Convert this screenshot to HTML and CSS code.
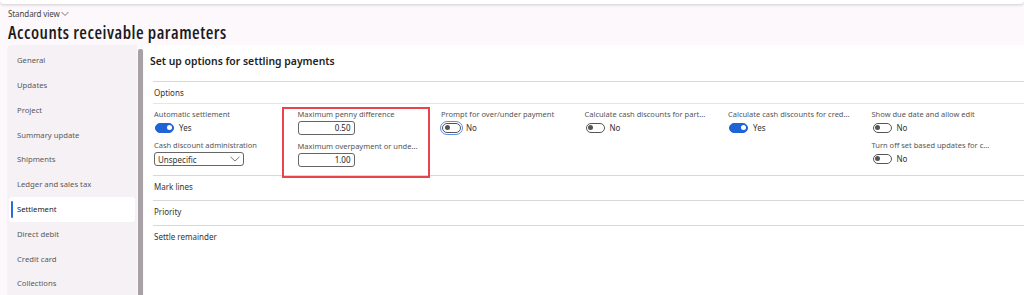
FILE: index.html
```html
<!DOCTYPE html>
<html>
<head>
<meta charset="utf-8">
<link rel="stylesheet" href="styles.css">
</head>
<body>
<div class="topbar"></div>
<header class="header">
  <div class="view">Standard view <svg class="chev" width="8" height="6" viewBox="0 0 8 6"><path d="M0.5 1 L4 4.5 L7.5 1" fill="none" stroke="#555" stroke-width="0.8"/></svg></div>
  <h1 class="title">Accounts receivable parameters</h1>
</header>
<div class="card">
  <nav class="nav">
    <div class="nav-item">General</div>
    <div class="nav-item">Updates</div>
    <div class="nav-item">Project</div>
    <div class="nav-item">Summary update</div>
    <div class="nav-item">Shipments</div>
    <div class="nav-item">Ledger and sales tax</div>
    <div class="nav-item active">Settlement</div>
    <div class="nav-item">Direct debit</div>
    <div class="nav-item">Credit card</div>
    <div class="nav-item">Collections</div>
  </nav>
  <div class="scroll"></div>
  <main class="main">
    <h2 class="heading">Set up options for settling payments</h2>
    <section class="group open">
      <div class="group-head">Options</div>
      <div class="fields">
        <div class="col">
          <div class="field">
            <div class="label">Automatic settlement</div>
            <div class="toggle-row"><span class="toggle on"></span><span class="tval">Yes</span></div>
          </div>
          <div class="field">
            <div class="label">Cash discount administration</div>
            <div class="select"><span>Unspecific</span><svg width="10" height="6" viewBox="0 0 10 6"><path d="M0.5 0.8 L5 5 L9.5 0.8" fill="none" stroke="#555" stroke-width="0.8"/></svg></div>
          </div>
        </div>
        <div class="col">
          <div class="field">
            <div class="label">Maximum penny difference</div>
            <div class="input">0.50</div>
          </div>
          <div class="field">
            <div class="label">Maximum overpayment or unde...</div>
            <div class="input">1.00</div>
          </div>
          <div class="annot"></div>
        </div>
        <div class="col">
          <div class="field">
            <div class="label">Prompt for over/under payment</div>
            <div class="toggle-row"><span class="toggle focus"></span><span class="tval">No</span></div>
          </div>
        </div>
        <div class="col">
          <div class="field">
            <div class="label">Calculate cash discounts for part...</div>
            <div class="toggle-row"><span class="toggle"></span><span class="tval">No</span></div>
          </div>
        </div>
        <div class="col">
          <div class="field">
            <div class="label">Calculate cash discounts for cred...</div>
            <div class="toggle-row"><span class="toggle on"></span><span class="tval">Yes</span></div>
          </div>
        </div>
        <div class="col">
          <div class="field">
            <div class="label">Show due date and allow edit</div>
            <div class="toggle-row"><span class="toggle"></span><span class="tval">No</span></div>
          </div>
          <div class="field">
            <div class="label">Turn off set based updates for c...</div>
            <div class="toggle-row"><span class="toggle"></span><span class="tval">No</span></div>
          </div>
        </div>
      </div>
    </section>
    <section class="group"><div class="group-head">Mark lines</div></section>
    <section class="group"><div class="group-head">Priority</div></section>
    <section class="group"><div class="group-head">Settle remainder</div></section>
  </main>
</div>
</body>
</html>
```
FILE: styles.css
```css
* { box-sizing: border-box; }
html, body { margin: 0; padding: 0; }
body {
  background: #fcf8fc;
  font-family: "Noto Sans", "Open Sans", sans-serif;
  color: #333;
  width: 1024px;
  height: 295px;
  overflow: hidden;
}
.topbar {
  height: 4px;
  background: #fff;
  border-radius: 0 0 4px 4px;
  box-shadow: 0 1px 3px rgba(0,0,0,0.18);
}
.header { padding: 5px 8px 0 8px; height: 41px; }
.view {
  font-size: 8px;
  color: #444;
  line-height: 10px;
  display: flex;
  align-items: center;
  gap: 1px;
  letter-spacing: -0.1px;
}
.title {
  margin: 2px 0 0 0;
  font-family: "Open Sans", "Noto Sans", sans-serif;
  font-stretch: 80%;
  font-size: 17.5px;
  font-weight: 600;
  color: #1b1b1b;
  line-height: 22px;
  letter-spacing: 0.5px;
}
.card {
  margin-left: 7px;
  display: flex;
  height: 250px;
}
.nav {
  width: 130px;
  background: #f5f1f5;
  border-radius: 6px 0 0 0;
  padding: 3.2px 2px 0 2px;
  flex: none;
}
.nav-item {
  height: 24.8px;
  line-height: 24.8px;
  font-size: 7.7px;
  color: #5a5a5a;
  padding-left: 8px;
  border-radius: 3px;
  position: relative;
}
.nav-item.active {
  background: #fff;
  color: #222;
}
.nav-item.active::before {
  content: "";
  position: absolute;
  left: 2px;
  top: 4px;
  bottom: 4px;
  width: 2px;
  background: #2a6ad9;
  border-radius: 1px;
}
.scroll {
  width: 5px;
  margin: 4px 1px 0 1px;
  background: #a7a1a5;
  border-radius: 2px 2px 0 0;
  flex: none;
}
.main {
  flex: 1;
  background: #fff;
  padding-left: 9px;
}
.heading {
  margin: 0 0 0 -3px;
  padding-top: 9px;
  font-size: 10.4px;
  font-weight: 600;
  color: #222;
  height: 36px;
  line-height: 14px;
}
.group {
  border-top: 1.5px solid #d8d8d8;
}
.group-head {
  height: 24px;
  line-height: 22px;
  font-size: 8px;
  color: #333;
  padding-left: 1px;
}
.group.open .group-head {
  height: 22px;
  line-height: 21px;
  border-bottom: 1px solid #e6e6e6;
}
.fields {
  display: flex;
  height: 71px;
  padding-top: 5px;
}
.col {
  width: 143.5px;
  flex: none;
  padding-left: 1px;
  position: relative;
  display: flex;
  flex-direction: column;
  gap: 6px;
}
.label {
  font-size: 7.5px;
  color: #555;
  line-height: 11px;
  white-space: nowrap;
}
.toggle-row {
  display: flex;
  align-items: center;
  height: 13px;
  margin-top: 1px;
}
.toggle {
  width: 19px;
  height: 10px;
  border-radius: 5px;
  border: 1px solid #555;
  background: #fff;
  position: relative;
  margin-left: 1px;
}
.toggle::after {
  content: "";
  position: absolute;
  left: 1.5px;
  top: 1.5px;
  width: 5px;
  height: 5px;
  border-radius: 50%;
  background: #555;
}
.toggle.on {
  background: #1f63d6;
  border-color: #1f63d6;
}
.toggle.on::after {
  left: auto;
  right: 1.5px;
  background: #fff;
}
.toggle.focus {
  outline: 1px solid #5b8ee6;
  outline-offset: 1.5px;
  border-radius: 5px;
}
.tval {
  font-size: 8px;
  color: #333;
  margin-left: 5px;
}
.select {
  width: 90px;
  height: 14px;
  border: 1px solid #666;
  border-radius: 3px;
  display: flex;
  align-items: center;
  justify-content: space-between;
  padding: 0 3px 0 3px;
  font-size: 8px;
  color: #333;
  margin-top: 1px;
}
.input {
  width: 57px;
  height: 14px;
  border: 1px solid #666;
  border-radius: 3px;
  font-size: 8px;
  color: #222;
  text-align: right;
  padding-right: 3px;
  line-height: 12px;
  margin-top: 1px;
}
.annot {
  position: absolute;
  left: -15px;
  top: -2px;
  width: 148px;
  height: 71px;
  border: 2px solid #e8444c;
  pointer-events: none;
}
```
